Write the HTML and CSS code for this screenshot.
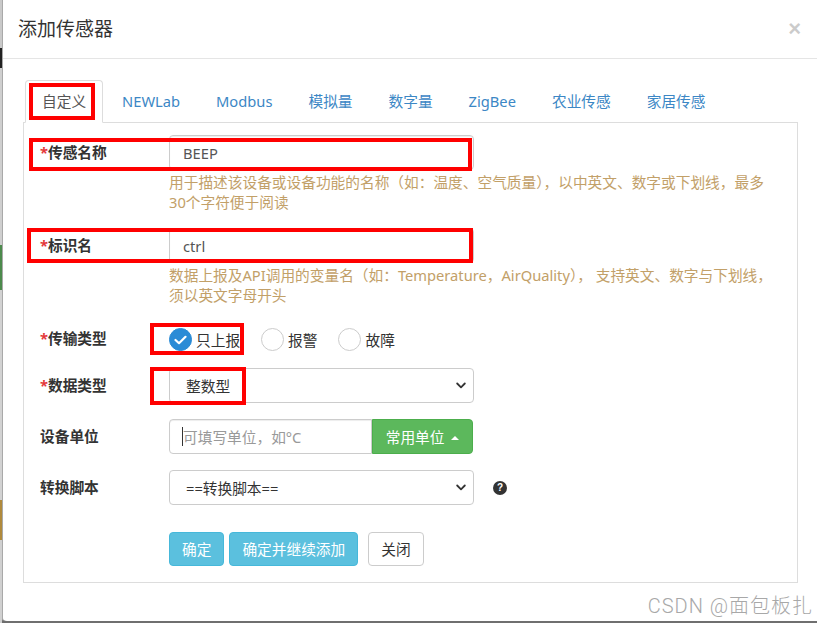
FILE: index.html
```html
<!DOCTYPE html>
<html lang="zh-CN">
<head>
    <meta charset="UTF-8">
    <meta name="viewport" content="width=device-width, initial-scale=1.0">
    <title>添加传感器</title>
    <link rel="stylesheet" href="styles.css">
</head>
<body>
    <div class="screen">
        <div class="edge"></div>
        <div class="modal">
            <div class="modal-header">
                <h4 class="modal-title">添加传感器</h4>
                <button class="close" type="button">&times;</button>
            </div>
            <div class="modal-body">
                <ul class="nav-tabs">
                    <li class="active"><a>自定义</a></li>
                    <li><a>NEWLab</a></li>
                    <li><a>Modbus</a></li>
                    <li><a>模拟量</a></li>
                    <li><a>数字量</a></li>
                    <li><a>ZigBee</a></li>
                    <li><a>农业传感</a></li>
                    <li><a>家居传感</a></li>
                </ul>
                <div class="tab-content">
                    <div class="form-group">
                        <label class="control-label"><span class="req">*</span>传感名称</label>
                        <div class="controls">
                            <input class="form-control" type="text" value="BEEP">
                            <p class="help-block">用于描述该设备或设备功能的名称（如：温度、空气质量），以中英文、数字或下划线，最多<br>30个字符便于阅读</p>
                        </div>
                    </div>
                    <div class="form-group">
                        <label class="control-label"><span class="req">*</span>标识名</label>
                        <div class="controls">
                            <input class="form-control" type="text" value="ctrl">
                            <p class="help-block">数据上报及API调用的变量名（如：Temperature，AirQuality）， 支持英文、数字与下划线，<br>须以英文字母开头</p>
                        </div>
                    </div>
                    <div class="form-group radios">
                        <label class="control-label"><span class="req">*</span>传输类型</label>
                        <div class="controls radio-list">
                            <span class="radio checked">
                                <span class="dot">
                                    <svg width="13" height="10" viewBox="0 0 13 10"><path d="M1.5 5 L5 8.2 L11.5 1.8" fill="none" stroke="#fff" stroke-width="2.2" stroke-linecap="round" stroke-linejoin="round"/></svg>
                                </span>只上报
                            </span>
                            <span class="radio"><span class="dot"></span>报警</span>
                            <span class="radio"><span class="dot"></span>故障</span>
                        </div>
                    </div>
                    <div class="form-group">
                        <label class="control-label"><span class="req">*</span>数据类型</label>
                        <div class="controls">
                            <div class="select">
                                <span>整数型</span>
                                <svg width="10" height="7" viewBox="0 0 10 7"><path d="M1.2 1.5 L5 5.3 L8.8 1.5" fill="none" stroke="#333" stroke-width="1.8" stroke-linecap="round" stroke-linejoin="round"/></svg>
                            </div>
                        </div>
                    </div>
                    <div class="form-group">
                        <label class="control-label">设备单位</label>
                        <div class="controls">
                            <div class="input-group">
                                <div class="form-control placeholder"><span class="cursor"></span>可填写单位，如°C</div>
                                <button class="btn-unit" type="button">常用单位 <span class="caret-up"></span></button>
                            </div>
                        </div>
                    </div>
                    <div class="form-group last">
                        <label class="control-label">转换脚本</label>
                        <div class="controls inline">
                            <div class="select">
                                <span>==转换脚本==</span>
                                <svg width="10" height="7" viewBox="0 0 10 7"><path d="M1.2 1.5 L5 5.3 L8.8 1.5" fill="none" stroke="#333" stroke-width="1.8" stroke-linecap="round" stroke-linejoin="round"/></svg>
                            </div>
                            <span class="help-icon">?</span>
                        </div>
                    </div>
                    <div class="form-actions">
                        <button class="btn btn-info" type="button">确定</button>
                        <button class="btn btn-info" type="button">确定并继续添加</button>
                        <button class="btn btn-default" type="button">关闭</button>
                    </div>
                </div>
            </div>
            <div class="watermark">CSDN @面包板扎</div>
        </div>

        <!-- annotation boxes drawn over the screenshot -->
        <div class="mark mark-tab"></div>
        <div class="mark mark-name"></div>
        <div class="mark mark-ident"></div>
        <div class="mark mark-radio"></div>
        <div class="mark mark-type"></div>
    </div>
</body>
</html>
```

FILE: styles.css
```css
* {
    box-sizing: border-box;
    margin: 0;
    padding: 0;
}
body {
    font-family: "Noto Sans", "Noto Sans CJK SC", sans-serif;
    font-size: 14.7px;
    color: #333;
    background-color: #6e6e6e;
    overflow: hidden;
}
.screen {
    position: relative;
    display: flex;
    height: 623px;
    overflow: hidden;
}
.edge {
    flex: none;
    width: 2px;
    background: linear-gradient(#c9c9c9 0, #c9c9c9 48px, #222 48px, #222 68px, #cfcfcf 68px, #cfcfcf 245px, #4c8a4c 245px, #4c8a4c 290px, #d2d2d2 290px, #d2d2d2 500px, #b08a3c 500px, #b08a3c 540px, #d0d0d0 540px);
}
.modal {
    position: relative;
    flex: none;
    width: 816px;
    height: 623px;
    background-color: #fff;
    border-left: 1px solid #a9a9a9;
    border-bottom: 2px solid #6f6f6f;
    border-bottom-left-radius: 5px;
}
.modal-header {
    display: flex;
    justify-content: space-between;
    align-items: center;
    height: 59px;
    padding: 0 17px 0 15px;
    border-bottom: 1px solid #e5e5e5;
}
.modal-title {
    font-size: 19px;
    font-weight: normal;
    line-height: 26px;
}
.close {
    background: none;
    border: 0;
    font: bold 22px "Liberation Sans", sans-serif;
    color: #000;
    opacity: 0.2;
}
.modal-body {
    padding: 21px 0 0 20px;
}
.nav-tabs {
    list-style: none;
    display: flex;
    width: 775px;
    padding-left: 2px;
    border-bottom: 1px solid #ddd;
}
.nav-tabs li {
    margin-right: 2px;
    margin-bottom: -1px;
}
.nav-tabs a {
    display: block;
    padding: 10px 16px;
    line-height: 21px;
    border: 1px solid transparent;
    border-radius: 4px 4px 0 0;
    color: #3c87c5;
}
.nav-tabs .active a {
    color: #555;
    background-color: #fff;
    border-color: #ddd #ddd transparent;
}
.tab-content {
    width: 775px;
    border: 1px solid #ddd;
    border-top: 0;
    padding: 12px 17px 16px 16px;
}
.form-group {
    display: flex;
    align-items: flex-start;
    margin-bottom: 16px;
}
.form-group.radios {
    margin-bottom: 10px;
}
.form-group.last {
    margin-bottom: 0;
}
.control-label {
    flex: none;
    width: 129px;
    font-weight: bold;
    line-height: 35px;
}
.req {
    color: #e4393c;
}
.controls {
    flex: 1;
}
.controls.inline {
    display: flex;
    align-items: center;
}
.form-control {
    display: block;
    width: 305px;
    height: 35px;
    padding: 0 13px;
    border: 1px solid #ccc;
    border-radius: 4px;
    font: inherit;
    color: #555;
    box-shadow: inset 0 1px 1px rgba(0, 0, 0, 0.075);
}
.help-block {
    margin-top: 2px;
    line-height: 20px;
    color: #c2a068;
    white-space: nowrap;
}
.radio-list {
    display: flex;
    align-items: center;
    height: 37px;
}
.radio {
    display: flex;
    align-items: center;
    margin-right: 21px;
}
.radio .dot {
    display: flex;
    align-items: center;
    justify-content: center;
    width: 23px;
    height: 23px;
    margin-right: 4px;
    border: 1px solid #ccc;
    border-radius: 50%;
}
.radio.checked .dot {
    background-color: #2a8bd6;
    border-color: #2a8bd6;
}
.select {
    display: flex;
    align-items: center;
    justify-content: space-between;
    width: 305px;
    height: 35px;
    padding: 0 7px 0 16px;
    border: 1px solid #ccc;
    border-radius: 4px;
    color: #333;
}
.input-group {
    display: flex;
    width: 304px;
}
.placeholder {
    display: flex;
    align-items: center;
    width: 203px;
    border-radius: 4px 0 0 4px;
    color: #999;
}
.cursor {
    width: 1px;
    height: 19px;
    margin-left: -1px;
    background-color: #333;
}
.btn-unit {
    flex: 1;
    height: 35px;
    border: 1px solid #4cae4c;
    border-radius: 0 4px 4px 0;
    background-color: #5cb85c;
    color: #fff;
    font: inherit;
}
.caret-up {
    display: inline-block;
    margin-left: 3px;
    vertical-align: 3px;
    border-left: 4px solid transparent;
    border-right: 4px solid transparent;
    border-bottom: 4px solid #fff;
}
.help-icon {
    display: flex;
    align-items: center;
    justify-content: center;
    width: 14px;
    height: 14px;
    margin-left: 19px;
    border-radius: 50%;
    background-color: #333;
    color: #fff;
    font: bold 10px "Liberation Sans", sans-serif;
}
.form-actions {
    display: flex;
    margin-top: 27px;
    padding-left: 129px;
}
.btn {
    height: 34px;
    padding: 0 12px;
    border: 1px solid;
    border-radius: 4px;
    font: inherit;
    line-height: 32px;
    margin-right: 5px;
}
.btn-info {
    background-color: #5bc0de;
    border-color: #46b8da;
    color: #fff;
}
.btn-default {
    margin-left: 5px;
    background-color: #fff;
    border-color: #ccc;
    color: #333;
}
.watermark {
    position: absolute;
    right: 5px;
    bottom: 2px;
    font-family: "Roboto", "Noto Sans CJK SC", sans-serif;
    font-size: 20px;
    font-weight: 300;
    letter-spacing: 1px;
    color: #a8a8a8;
}
.mark {
    position: absolute;
    border: 4px solid #f00;
}
.mark-tab {
    left: 29px;
    top: 83px;
    width: 66px;
    height: 37px;
}
.mark-name {
    left: 29px;
    top: 138px;
    width: 443px;
    height: 33px;
}
.mark-ident {
    left: 27px;
    top: 228px;
    width: 446px;
    height: 35px;
}
.mark-radio {
    left: 150px;
    top: 323px;
    width: 94px;
    height: 32px;
}
.mark-type {
    left: 150px;
    top: 367px;
    width: 96px;
    height: 38px;
}
```
